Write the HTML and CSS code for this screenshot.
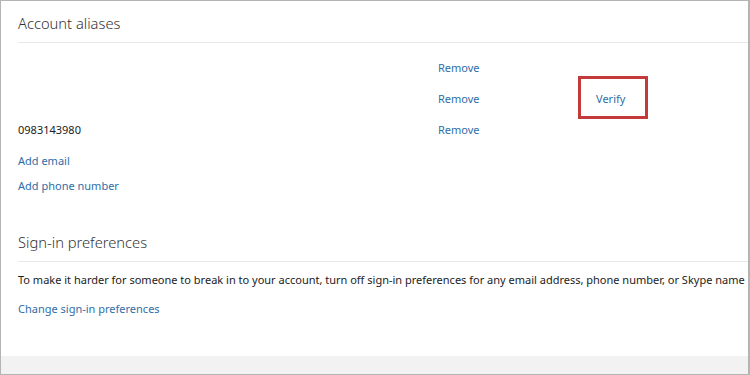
FILE: index.html
```html
<!DOCTYPE html>
<html lang="en">
<head>
    <meta charset="UTF-8">
    <meta name="viewport" content="width=device-width, initial-scale=1.0">
    <title>Account aliases</title>
    <link rel="stylesheet" href="styles.css">
</head>
<body>

    <div class="frame">

        <!-- Account aliases -->
        <section class="section">
            <h2 class="section-title">Account aliases</h2>

            <div class="alias-list">
                <div class="alias-row">
                    <span class="alias-name"></span>
                    <a href="#" class="link">Remove</a>
                    <span></span>
                </div>
                <div class="alias-row">
                    <span class="alias-name"></span>
                    <a href="#" class="link">Remove</a>
                    <span class="verify-cell">
                        <a href="#" class="link verify-link">Verify</a>
                        <span class="highlight"></span>
                    </span>
                </div>
                <div class="alias-row">
                    <span class="alias-name">0983143980</span>
                    <a href="#" class="link">Remove</a>
                    <span></span>
                </div>
            </div>

            <div class="add-links">
                <a href="#" class="link">Add email</a>
                <a href="#" class="link">Add phone number</a>
            </div>
        </section>

        <!-- Sign-in preferences -->
        <section class="section">
            <h2 class="section-title">Sign-in preferences</h2>
            <p class="note">To make it harder for someone to break in to your account, turn off sign-in preferences for any email address, phone number, or Skype name</p>
            <a href="#" class="link">Change sign-in preferences</a>
        </section>

        <div class="footer-band"></div>
    </div>

</body>
</html>
```

FILE: styles.css
```css
* {
    margin: 0;
    padding: 0;
    box-sizing: border-box;
}

body {
    background-color: #fff;
    color: #222;
    font-family: 'Noto Sans', 'Open Sans', sans-serif;
    font-size: 11px;
}

.frame {
    width: 750px;
    height: 375px;
    border: 1px solid #b4b4b4;
    border-right-width: 2px;
    display: flex;
    flex-direction: column;
    overflow: hidden;
}

.section {
    padding-left: 17px;
    display: flex;
    flex-direction: column;
    align-items: flex-start;
}

.section-title {
    align-self: stretch;
    font-size: 14.7px;
    font-weight: 300;
    color: #333;
    padding-top: 12px;
    padding-bottom: 9px;
    border-bottom: 1px solid #e8e8e8;
}

.link {
    color: #2f6ea8;
    text-decoration: none;
}

/* Alias rows */
.alias-list {
    align-self: stretch;
    margin-top: 16px;
    display: flex;
    flex-direction: column;
    gap: 14px;
}

.alias-row {
    display: grid;
    grid-template-columns: 420px 140px auto;
    align-items: center;
    height: 17px;
}

.alias-name {
    color: #222;
}

.verify-cell {
    position: relative;
    padding-left: 18px;
}

.highlight {
    position: absolute;
    left: 0;
    top: -15px;
    width: 70px;
    height: 43px;
    border: 3px solid #c23a3a;
}

.add-links {
    margin-top: 14px;
    display: flex;
    flex-direction: column;
    gap: 8px;
}

.add-links .link {
    line-height: 17px;
}

.section + .section {
    margin-top: 26px;
}

.note {
    margin-top: 10px;
    white-space: nowrap;
    color: #222;
}

.section .note + .link {
    margin-top: 14px;
}

.footer-band {
    margin-top: auto;
    height: 18px;
    background-color: #f2f2f2;
}
```
